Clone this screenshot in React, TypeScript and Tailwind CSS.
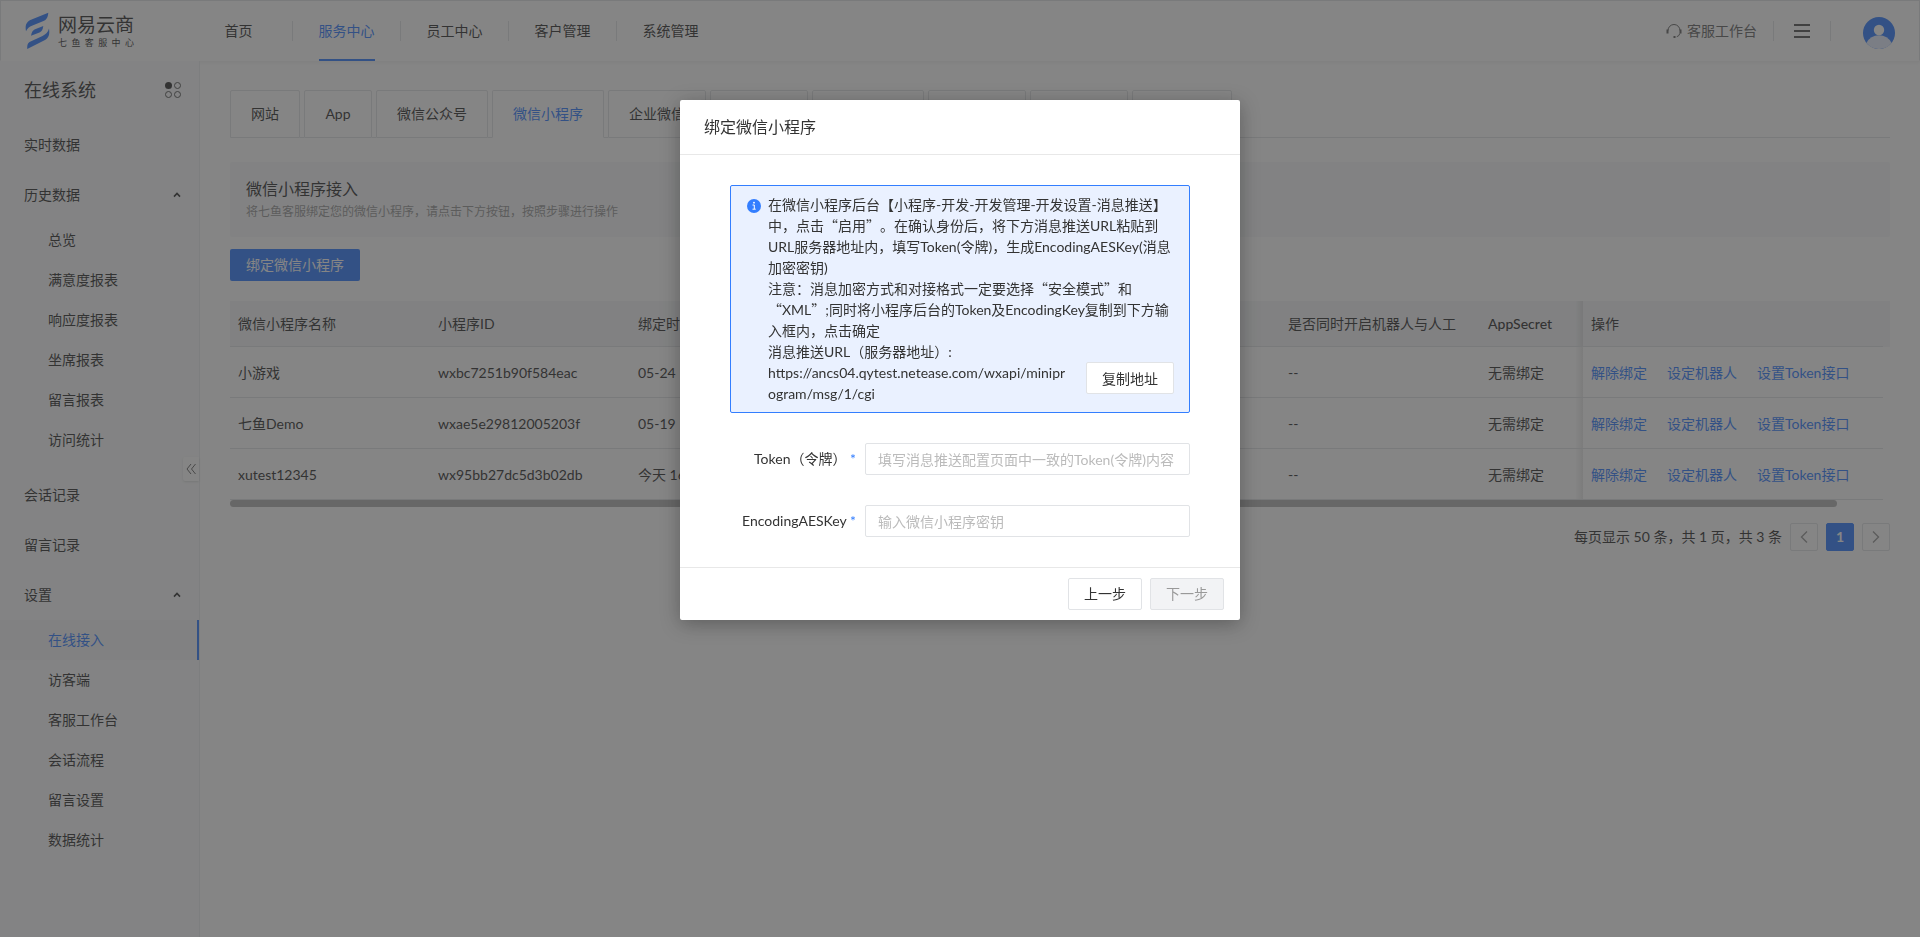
import { Fragment } from 'react'

const rows = [
    { name: '小游戏', id: 'wxbc7251b90f584eac', time: '05-24 11:20' },
    { name: '七鱼Demo', id: 'wxae5e29812005203f', time: '05-19 15:42' },
    { name: 'xutest12345', id: 'wx95bb27dc5d3b02db', time: '今天 16:08' },
]

const history = ['总览', '满意度报表', '响应度报表', '坐席报表', '留言报表', '访问统计']
const settings = ['在线接入', '访客端', '客服工作台', '会话流程', '留言设置', '数据统计']
const nav = ['首页', '服务中心', '员工中心', '客户管理', '系统管理']

const tabs = [
    { label: '网站', width: 'w-[70px]' },
    { label: 'App', width: 'w-[68px]' },
    { label: '微信公众号', width: 'w-[112px]' },
    { label: '微信小程序', width: 'w-[112px]' },
    { label: '企业微信', width: 'w-[98px]' },
    { label: '新浪微博', width: 'w-[98px]' },
    { label: '抖音企业号', width: 'w-[112px]' },
    { label: '开放平台', width: 'w-[98px]' },
    { label: '电话接入', width: 'w-[98px]' },
    { label: '邮件接入', width: 'w-[100px]' },
]

const Chevron = () => (
    <svg className="w-2 h-2" viewBox="0 0 8 8" fill="none" stroke="currentColor" strokeWidth="1.6">
        <path d="M1 5.6 4 2.4 7 5.6" />
    </svg>
)

const Logo = () => (
    <a href="#" className="flex items-center gap-[7px] w-[184px] pl-6" aria-label="网易云商">
        <svg className="w-[26px] h-[38px] text-[#337eff]" viewBox="0 0 26 38" fill="currentColor">
            <path d="M23.3.7 6 7.8C2 9.6-.3 12.500 1 19.200 2.500 16.500 4 15 7.500 13.600L18.500 9C21.500 7.700 22.800 5.500 23.300.7Z" />
            <path d="M18.300 14 9.500 17.600C7.600 18.500 6.600 20.500 6 23.800L14.500 20.400C16.800 19.400 17.800 17.500 18.300 14Z" />
            <path d="M24 16.500C25 23 23.500 26.200 19.500 28.200L2.200 37C2.200 34 2.300 31.200 4.500 30L17.500 24C21 22.200 23 20 24 16.500Z" />
        </svg>
        <span className="flex flex-col text-[#333]">
            <span className="text-[19px] leading-6">网易云商</span>
            <span className="flex justify-between text-[9px] leading-3">
                {'七鱼客服中心'.split('').map((c) => <span key={c}>{c}</span>)}
            </span>
        </span>
    </a>
)

const Header = () => (
    <header className="flex h-[61px] border border-[#e1e3e6] border-b-transparent bg-white shadow-[0_1px_4px_rgba(0,0,0,0.08)] relative">
        <Logo />
        <nav className="flex items-stretch -mb-px">
            {nav.map((item, i) => (
                <div key={item} className="flex items-center">
                    {i > 0 && <span className="h-5 w-px bg-[#e1e3e6]" />}
                    <span className="w-[107px] h-full flex justify-center">
                        <a
                            href="#"
                            className={i === 1
                                ? 'flex items-center text-[#337eff] border-y-2 border-t-transparent border-b-[#337eff]'
                                : 'flex items-center border-y-2 border-transparent'}
                        >
                            {item}
                        </a>
                    </span>
                </div>
            ))}
        </nav>
        <div className="ml-auto flex items-center pr-6">
            <a href="#" className="flex items-center gap-[5px] text-[#666] pr-4">
                <svg className="w-4 h-4" viewBox="0 0 16 16" fill="none" stroke="currentColor">
                    <path d="M2 7.500a6 6 0 0 1 12 0M13.800 10.500a4 4 0 0 1-3 3.200" />
                    <path d="M1.500 6.500v4M14.500 6.500v4M7.500 14h2" strokeWidth="2" />
                </svg>
                客服工作台
            </a>
            <span className="h-5 w-px bg-[#e1e3e6]" />
            <button className="px-5" aria-label="菜单">
                <svg className="w-4 h-4" viewBox="0 0 16 16" stroke="#555" strokeWidth="2">
                    <path d="M0 2h16M0 8h16M0 14h16" />
                </svg>
            </button>
            <span className="h-5 w-px bg-[#e1e3e6]" />
            <button className="ml-8 mt-1" aria-label="账号">
                <svg className="w-8 h-8" viewBox="0 0 32 32">
                    <circle cx="16" cy="16" r="16" fill="#337eff" />
                    <circle cx="16" cy="13" r="5.200" fill="#fff" />
                    <path d="M3.500 26a14 14 0 0 1 25 0 16 16 0 0 1-25 0Z" fill="#e6edff" />
                </svg>
            </button>
        </div>
    </header>
)

const SubMenu = ({ items, active }: { items: string[]; active?: string }) => (
    <ul>
        {items.map((item) => (
            <li key={item}>
                <a
                    href="#"
                    className={item === active
                        ? 'flex items-center h-10 pl-12 bg-[#f4f5f7] text-[#337eff] border-r-2 border-[#337eff]'
                        : 'flex items-center h-10 pl-12'}
                >
                    {item}
                </a>
            </li>
        ))}
    </ul>
)

const groupClass = 'flex items-center justify-between w-full h-[50px] pl-6 pr-[18px]'

const Sidebar = () => (
    <aside className="relative w-[200px] shrink-0 bg-[#fafbfc] border-r border-[#ebedf0]">
        <div className="flex items-center justify-between h-[59px] pl-6 pr-[18px] pb-[2px]">
            <h2 className="text-lg">在线系统</h2>
            <svg className="w-4 h-4" viewBox="0 0 16 16" fill="none" stroke="#555">
                <circle cx="3.500" cy="3.500" r="3.500" fill="#333" stroke="none" />
                <circle cx="12.500" cy="3.500" r="3" />
                <circle cx="3.500" cy="12.500" r="3" />
                <circle cx="12.500" cy="12.500" r="3" />
            </svg>
        </div>
        <a href="#" className={groupClass}>实时数据</a>
        <button className={groupClass}>历史数据 <Chevron /></button>
        <SubMenu items={history} />
        <div className="h-[10px]" />
        <a href="#" className={groupClass}>会话记录</a>
        <a href="#" className={groupClass}>留言记录</a>
        <button className={groupClass}>设置 <Chevron /></button>
        <SubMenu items={settings} active="在线接入" />
        <button
            className="absolute right-0 top-[396px] flex items-center justify-center w-4 h-6 bg-white rounded-l-xs shadow-sm"
            aria-label="收起"
        >
            <svg className="w-[10px] h-[10px]" viewBox="0 0 10 10" fill="none" stroke="#666">
                <path d="M5 0 1 5l4 5M9.500 0l-4 5 4 5" />
            </svg>
        </button>
    </aside>
)

const Tabs = () => (
    <div role="tablist" className="flex">
        {tabs.map(({ label, width }, i) => (
            <Fragment key={label}>
                <button
                    role="tab"
                    aria-selected={i === 3}
                    className={`${width} h-12 shrink-0 rounded-t-xs border border-[#e1e3e6] ${i === 3 ? 'border-b-transparent text-[#337eff]' : ''}`}
                >
                    {label}
                </button>
                <span className="w-1 border-b border-[#e1e3e6]" />
            </Fragment>
        ))}
        <span className="grow border-b border-[#e1e3e6]" />
    </div>
)

const th = 'h-[46px] px-2 whitespace-nowrap border-b border-[#e1e3e6]'
const td = 'h-[51px] px-2 pt-[2px] border-b border-[#e1e3e6]'
// soft edge on the left of the pinned column
const edge = 'bg-[linear-gradient(to_left,rgba(0,0,0,0.09),transparent_8px)]'

const BindingTable = () => (
    <div>
        <table className="w-full table-fixed text-left border-separate border-spacing-0">
            <colgroup>
                <col className="w-[200px]" />
                <col className="w-[200px]" />
                <col className="w-[200px]" />
                <col />
                <col className="w-[200px]" />
                <col className="w-[103px]" />
                <col className="w-[300px]" />
                <col className="w-[7px]" />
            </colgroup>
            <thead className="bg-[#f5f6f8]">
                <tr>
                    <th className={`${th} font-normal`}>微信小程序名称</th>
                    <th className={`${th} font-normal`}>小程序ID</th>
                    <th className={`${th} font-normal`}>绑定时间</th>
                    <th className={`${th} font-normal`} />
                    <th className={`${th} font-normal`}>是否同时开启机器人与人工</th>
                    <th className={`${th} ${edge} font-medium`}>AppSecret</th>
                    <th className={`${th} font-normal`}>操作</th>
                    <th />
                </tr>
            </thead>
            <tbody>
                {rows.map((row) => (
                    <tr key={row.id}>
                        <td className={td}>{row.name}</td>
                        <td className={td}>{row.id}</td>
                        <td className={td}>{row.time}</td>
                        <td className={td} />
                        <td className={td}>--</td>
                        <td className={`${td} ${edge}`}>无需绑定</td>
                        <td className={td}>
                            <div className="flex gap-5 text-[#337eff]">
                                <a href="#">解除绑定</a>
                                <a href="#">设定机器人</a>
                                <a href="#">设置Token接口</a>
                            </div>
                        </td>
                    </tr>
                ))}
            </tbody>
        </table>
        <div className="h-[7px] mr-[53px] rounded-full bg-[#b3b3b3]" />
    </div>
)

const pageButton = 'flex items-center justify-center w-7 h-7 rounded-xs border'

const Pagination = () => (
    <div className="flex items-center justify-end gap-2 mt-4">
        <span>每页显示 50 条，共 1 页，共 3 条</span>
        <button className={`${pageButton} border-[#e1e3e6]`} aria-label="上一页">
            <svg className="w-3 h-3" viewBox="0 0 12 12" fill="none" stroke="#999" strokeWidth="1.400">
                <path d="M9 0.500 3.500 6 9 11.500" />
            </svg>
        </button>
        <button className={`${pageButton} border-[#337eff] bg-[#337eff] text-white font-bold`}>1</button>
        <button className={`${pageButton} border-[#e1e3e6]`} aria-label="下一页">
            <svg className="w-3 h-3" viewBox="0 0 12 12" fill="none" stroke="#999" strokeWidth="1.400">
                <path d="M3 0.500 8.500 6 3 11.500" />
            </svg>
        </button>
    </div>
)

const Quoted = ({ children }: { children: string }) => (
    <>
        <span className="font-['Noto_Sans_CJK_SC',sans-serif]">“</span>
        {children}
        <span className="font-['Noto_Sans_CJK_SC',sans-serif]">”</span>
    </>
)

const Field = ({ id, label, placeholder }: { id: string; label: string; placeholder: string }) => (
    <div className="flex items-center mt-[30px]">
        <label htmlFor={id} className="w-[126px] text-right">
            {label} <span className="text-[#337eff]">*</span>
        </label>
        <input
            id={id}
            placeholder={placeholder}
            className="grow ml-[9px] h-8 px-3 rounded-xs border border-[#e1e3e6] placeholder:text-[#bbb]"
        />
    </div>
)

const Dialog = () => (
    <div className="fixed inset-0 flex justify-center items-start pt-[100px] bg-[#333]/60">
        <div
            role="dialog"
            aria-modal="true"
            aria-labelledby="dialog-title"
            className="w-[560px] bg-white rounded-xs shadow-[0_4px_20px_rgba(0,0,0,0.3)]"
        >
            <h1 id="dialog-title" className="h-[55px] flex items-center px-6 text-base border-b border-[#e8e8e8]">
                绑定微信小程序
            </h1>
            <div className="px-[50px] py-[30px]">
                <div className="flex gap-[7px] pl-4 pr-[15px] py-2 rounded-xs border border-[#337eff] bg-[#eaf1ff] leading-[21px]">
                    <svg className="w-[14px] h-[14px] mt-[5px] shrink-0" viewBox="0 0 14 14">
                        <circle cx="7" cy="7" r="7" fill="#337eff" />
                        <path d="M5.500 6h1.800v4M5.500 10.200h3.200" stroke="#fff" fill="none" />
                        <circle cx="7" cy="3.700" r="0.900" fill="#fff" />
                    </svg>
                    <div className="grow">
                        <p>
                            在微信小程序后台【小程序-开发-开发管理-开发设置-消息推送】中，点击<Quoted>启用</Quoted>。在确认身份后，将下方消息推送URL粘贴到URL服务器地址内，填写Token(令牌)，生成EncodingAESKey(消息加密密钥)
                        </p>
                        <p>
                            注意：消息加密方式和对接格式一定要选择<Quoted>安全模式</Quoted>和<wbr /><Quoted>XML</Quoted>;同时将小程序后台的Token及EncodingKey复制到下方输入框内，点击确定
                        </p>
                        <div className="flex items-end justify-between">
                            <div className="w-[304px]">
                                <p>消息推送URL（服务器地址）:</p>
                                <p className="break-all">https://ancs04.qytest.netease.com/wxapi/miniprogram/msg/1/cgi</p>
                            </div>
                            <button className="h-8 px-[15px] mb-[10px] rounded-xs border border-[#e1e3e6] bg-white shrink-0">复制地址</button>
                        </div>
                    </div>
                </div>
                <Field id="token" label="Token（令牌）" placeholder="填写消息推送配置页面中一致的Token(令牌)内容" />
                <Field id="aes-key" label="EncodingAESKey" placeholder="输入微信小程序密钥" />
            </div>
            <div className="flex justify-end gap-2 px-4 py-[10px] border-t border-[#e8e8e8]">
                <button className="h-8 px-[15px] rounded-xs border border-[#e1e3e6]">上一步</button>
                <button disabled className="h-8 px-[15px] rounded-xs border border-[#e1e3e6] bg-[#f2f3f5] text-[#999]">下一步</button>
            </div>
        </div>
    </div>
)

export default function App() {
    return (
        <div
            lang="zh-CN"
            className="min-h-screen flex flex-col bg-white text-sm text-[#333] font-['Lato','Noto_Sans_CJK_SC',sans-serif] [text-spacing-trim:space-all]"
        >
            <Header />
            <div className="grow flex">
                <Sidebar />
                <main className="grow min-w-0 px-[30px] pt-[29px]">
                    <Tabs />
                    <section className="mt-6 px-4 pt-[15px] pb-[14px] rounded-xs bg-[#f7f8fa]">
                        <h3 className="text-base leading-6">微信小程序接入</h3>
                        <p className="text-xs leading-[22px] text-[#999]">将七鱼客服绑定您的微信小程序，请点击下方按钮，按照步骤进行操作</p>
                    </section>
                    <button className="block h-8 px-4 mt-3 mb-5 rounded-xs bg-[#337eff] text-white">绑定微信小程序</button>
                    <BindingTable />
                    <Pagination />
                </main>
            </div>
            <Dialog />
        </div>
    )
}
